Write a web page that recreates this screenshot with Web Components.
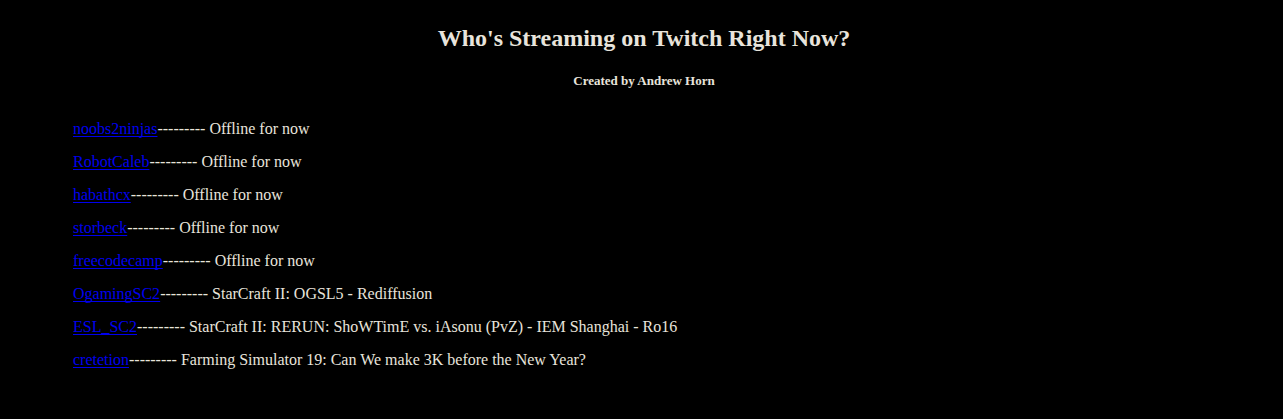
<!DOCTYPE html>
<html lang="en">
<head>
<meta charset="utf-8">
<title>Who's Streaming on Twitch Right Now?</title>
<style>
body { margin: 0; background: #000; color: #e8e4dc; font: 16px "Liberation Serif", "Times New Roman", serif; }
</style>
</head>
<body>
<stream-page></stream-page>
<script>
class StreamHeader extends HTMLElement {
  constructor() {
    super();
    this.attachShadow({ mode: "open" }).innerHTML = `
      <style>
        :host { display: block; text-align: center; }
        h2 { margin: 0 0 21px; font-size: 24px; line-height: 28px; }
        h5 { margin: 0; font-size: 13px; line-height: 16px; }
      </style>
      <h2><slot></slot></h2>
      <h5><slot name="author"></slot></h5>`;
  }
}
customElements.define("stream-header", StreamHeader);

class StreamChannel extends HTMLElement {
  constructor() {
    super();
    this.attachShadow({ mode: "open" }).innerHTML = `
      <style>
        :host { display: block; line-height: 18px; }
        a { color: #00e; text-decoration: underline; text-decoration-skip-ink: none; text-underline-offset: 2px; }
      </style>
      <a></a>--------- <slot></slot>`;
  }
  connectedCallback() {
    const name = this.getAttribute("name");
    const link = this.shadowRoot.querySelector("a");
    link.textContent = name;
    link.href = "https://www.twitch.tv/" + name;
  }
}
customElements.define("stream-channel", StreamChannel);

class StreamPage extends HTMLElement {
  constructor() {
    super();
    this.attachShadow({ mode: "open" }).innerHTML = `
      <style>
        :host { display: block; padding: 24px 4px 48px 9px; }
        main { display: grid; gap: 15px; margin-top: 31px; padding: 0 64px; }
      </style>
      <stream-header>Who's Streaming on Twitch Right Now?<span slot="author">Created by Andrew Horn</span></stream-header>
      <main>
        <stream-channel name="noobs2ninjas">Offline for now</stream-channel>
        <stream-channel name="RobotCaleb">Offline for now</stream-channel>
        <stream-channel name="habathcx">Offline for now</stream-channel>
        <stream-channel name="storbeck">Offline for now</stream-channel>
        <stream-channel name="freecodecamp">Offline for now</stream-channel>
        <stream-channel name="OgamingSC2">StarCraft II: OGSL5 - Rediffusion</stream-channel>
        <stream-channel name="ESL_SC2">StarCraft II: RERUN: ShoWTimE vs. iAsonu (PvZ) - IEM Shanghai - Ro16</stream-channel>
        <stream-channel name="cretetion">Farming Simulator 19: Can We make 3K before the New Year?</stream-channel>
      </main>`;
  }
}
customElements.define("stream-page", StreamPage);
</script>
</body>
</html>
